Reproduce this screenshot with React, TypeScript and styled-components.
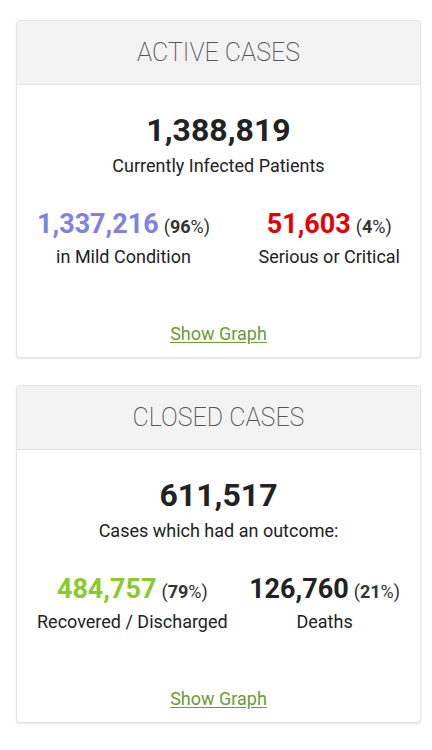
import React from "react";
import styled, { createGlobalStyle } from "styled-components";

const Global = createGlobalStyle`
  html, body { margin: 0; padding: 0; background: #ffffff; }
  body { font-family: Roboto, "Noto Sans", "Liberation Sans", sans-serif; color: #222; }
`;

const Page = styled.div`
  padding: 20px 11px 20px 16px;
  display: flex;
  flex-direction: column;
  gap: 27px;
`;

const Card = styled.section`
  border: 1px solid #e3e3e3;
  border-radius: 4px;
  box-shadow: 0 1px 2px rgba(0, 0, 0, 0.1);
  background: #fff;
  overflow: hidden;
`;

const Header = styled.div`
  background: #f3f3f3;
  border-bottom: 1px solid #e2e2e2;
  padding: 16px 0 15px;
  text-align: center;
  font-size: 25px;
  line-height: 32px;
  font-weight: 200;
  color: #555;
`;

const Body = styled.div`
  padding: 25px 20px 11px 20px;
  text-align: center;
  display: flex;
  flex-direction: column;
`;

const BigNumber = styled.div`
  font-size: 32px;
  line-height: 40px;
  font-weight: 700;
  color: #222;
`;

const Caption = styled.div<{ $top?: number }>`
  font-size: 18px;
  line-height: 24px;
  color: #222;
  margin-top: ${(p) => p.$top ?? 0}px;
`;

const Row = styled.div`
  display: flex;
  justify-content: space-between;
  margin-top: 29px;
`;

const Col = styled.div`
  display: flex;
  flex-direction: column;
  align-items: center;
`;

const Figure = styled.div`
  white-space: nowrap;
  line-height: 34px;
`;

const Num = styled.span<{ $color: string }>`
  font-size: 27px;
  font-weight: 700;
  color: ${(p) => p.$color};
`;

const Pct = styled.span`
  font-size: 18px;
  color: #333;
  margin-left: 5px;
  b { font-weight: 700; }
`;

const Link = styled.a`
  display: block;
  margin-top: 53px;
  font-size: 18px;
  line-height: 24px;
  color: #6a9c34;
  text-decoration: underline;
  text-underline-offset: 2px;
`;

type Stat = { value: string; pct: string; label: string; color: string };

function StatCol({ s }: { s: Stat }) {
  return (
    <Col>
      <Figure>
        <Num $color={s.color}>{s.value}</Num>
        <Pct>
          (<b>{s.pct}</b>%)
        </Pct>
      </Figure>
      <Caption $top={0}>{s.label}</Caption>
    </Col>
  );
}

function CaseCard({
  title,
  total,
  caption,
  stats,
}: {
  title: string;
  total: string;
  caption: string;
  stats: Stat[];
}) {
  return (
    <Card>
      <Header>{title}</Header>
      <Body>
        <BigNumber>{total}</BigNumber>
        <Caption $top={4}>{caption}</Caption>
        <Row>
          {stats.map((s) => (
            <StatCol key={s.label} s={s} />
          ))}
        </Row>
        <Link href="#">Show Graph</Link>
      </Body>
    </Card>
  );
}

export default function App() {
  return (
    <>
      <Global />
      <Page>
        <CaseCard
          title="ACTIVE CASES"
          total="1,388,819"
          caption="Currently Infected Patients"
          stats={[
            { value: "1,337,216", pct: "96", label: "in Mild Condition", color: "#8080e6" },
            { value: "51,603", pct: "4", label: "Serious or Critical", color: "#e60000" },
          ]}
        />
        <CaseCard
          title="CLOSED CASES"
          total="611,517"
          caption="Cases which had an outcome:"
          stats={[
            { value: "484,757", pct: "79", label: "Recovered / Discharged", color: "#8aca2b" },
            { value: "126,760", pct: "21", label: "Deaths", color: "#222" },
          ]}
        />
      </Page>
    </>
  );
}
